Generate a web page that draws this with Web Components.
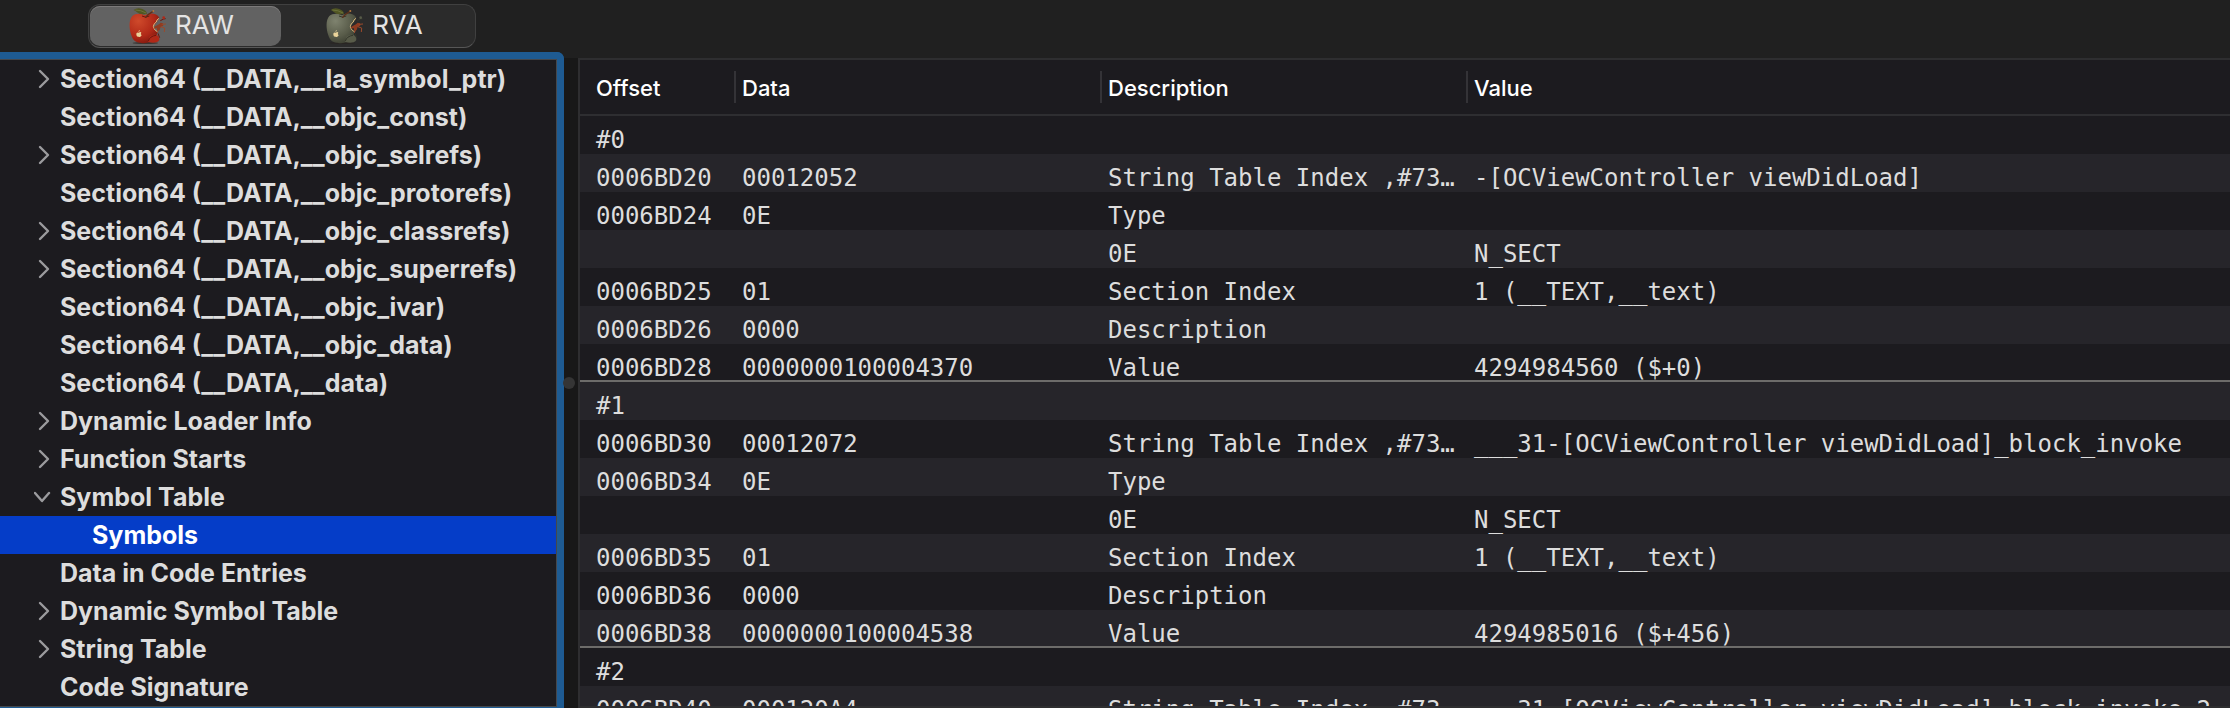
<!DOCTYPE html>
<html lang="en">
<head>
<meta charset="utf-8">
<title>Mach-O Viewer</title>
<style>
html, body { margin: 0; height: 100%; background: #202020; }
body { font-family: Inter, "Liberation Sans", sans-serif; color: #dddddd; }
</style>
</head>
<body>
<viewer-window></viewer-window>
<script>
const define = (name, html, setup) => {
  const template = document.createElement('template');
  template.innerHTML = html;
  customElements.define(name, class extends HTMLElement {
    constructor() {
      super();
      this.attachShadow({ mode: 'open' }).append(template.content.cloneNode(true));
    }
    connectedCallback() { if (setup) setup(this, this.shadowRoot); }
  });
};

define('apple-icon', `
<style>
:host { display: block; width: 40px; height: 38px; --light: #cf4a2b; --body: #b02817; --dark: #6f150d; }
:host([tone="green"]) { --light: #7f836f; --body: #585b49; --dark: #34372b; }
svg { display: block; width: 100%; height: 100%; }
.l { stop-color: var(--light); } .b { stop-color: var(--body); } .d { stop-color: var(--dark); }
.dark { stroke: var(--dark); } .foot { fill: var(--body); }
</style>
<svg viewBox="50 18 120 114" aria-hidden="true">
  <defs><radialGradient id="g" cx=".3" cy=".25" r=".9"><stop class="l" offset="0"/><stop class="b" offset=".6"/><stop class="d" offset="1"/></radialGradient></defs>
  <ellipse cx="102" cy="126" rx="38" ry="3" fill="#2a2421" opacity=".7"/>
  <path fill="url(#g)" d="M101 43C91 36 72 36 63 45 52 57 53 82 60 103 65 118 74 126 87 125 98 128 108 126 117 123L136 103 138 94 132 88 126 76 137 62 144 50C136 35 113 35 101 43Z"/>
  <path class="foot" d="M115 106Q133 95 141 106 149 119 136 124 122 127 110 122Z"/>
  <path fill="none" class="dark" stroke-width="3" d="M92 45Q102 52 114 45M111 120Q116 105 134 103M140 97l5 13"/>
  <path fill="none" stroke="#d8b67c" stroke-width="3" d="M143 52l-6 5-2 6-6 5-3 8 3 8 4 5 6 3"/>
  <path fill="#8f3b20" d="M129 77l14-7 5-5 7 2 1 7-8 4-3 9-7 4-2-10-8 2z"/>
  <path fill="none" stroke="#9a4a2c" stroke-width="3" d="M151 70l13-1M148 77l12 4-1 12M141 88l-3 8"/>
  <path fill="none" class="dark" stroke-width="3" d="M147 59l10-5 6-1"/>
  <circle class="foot" cx="157" cy="50" r="4"/>
  <path fill="#515623" d="M67 27Q78 18 93 24 106 29 107 38 87 43 77 34 73 29 67 27Z"/>
  <path fill="none" stroke="#788045" stroke-width="2" d="M72 27Q89 27 104 36"/>
  <path fill="none" stroke="#5c301b" stroke-width="4" stroke-linecap="round" d="M103 49Q109 40 125 31"/>
  <circle cx="126" cy="30" r="3" fill="#b4773d"/>
  <path fill="#ead49b" d="M82 95q6-4 8 0-4 4 1 8-4 7-9 4-6 2-7-6-1-8 7-6zM81 93q0-4 5-6 0 5-5 6z"/>
</svg>`);

define('mode-switch', `
<style>
:host { display: block; }
div { display: inline-flex; gap: 2px; box-sizing: border-box; width: 388px; height: 44px; padding: 1px; border: 1px solid #404040; border-bottom-color: #575757; border-radius: 12px; background: #2b2b2b; }
button { flex: 1; display: flex; align-items: center; justify-content: center; gap: 7px; margin: 0; padding: 0 9px 0 0; border: 0; border-radius: 10px; background: none; color: #e4e4e4; font: 400 26px/36px Inter, sans-serif; }
button span { padding-bottom: 2px; }
button[aria-pressed="true"] { background: #626262; box-shadow: inset 0 1px #7c7a7a; }
</style>
<div role="group" aria-label="Address mode">
  <button type="button" aria-pressed="true"><apple-icon></apple-icon><span>RAW</span></button>
  <button type="button" aria-pressed="false"><apple-icon tone="green"></apple-icon><span>RVA</span></button>
</div>`);

define('tree-row', `
<style>
:host { display: block; }
button { display: flex; align-items: center; gap: 6px; width: 100%; height: 38px; margin: 0; padding: 0 0 0 34px; border: 0; background: none; color: #dddddd; font: 700 25px/38px Inter, sans-serif; white-space: nowrap; text-align: left; }
svg { flex: none; width: 20px; height: 20px; fill: none; stroke: #9b9b9e; stroke-width: 2.4; stroke-linecap: round; stroke-linejoin: round; }
path { display: none; }
:host([state="closed"]) .closed, :host([state="open"]) .open { display: inline; }
:host([nested]) button { padding-left: 66px; }
:host([selected]) button { background: #053dc8; color: #ffffff; }
</style>
<button type="button"><svg viewBox="0 0 20 20" aria-hidden="true"><path class="closed" d="M6 2l8 8-8 8"/><path class="open" d="M1 6l7 8 7-8"/></svg><slot></slot></button>`);

define('section-tree', `
<style>
:host { display: block; box-sizing: border-box; overflow: hidden; border: solid #1e5b92; border-width: 7px 7px 1px 0; border-radius: 0 7px 0 0; background: #1e5b92; }
nav { box-sizing: border-box; height: 100%; overflow: hidden; background: #1c1b1f; border: solid #45484c; border-width: 1px 1px 1px 0; }
</style>
<nav aria-label="Sections"></nav>`, (host, root) => {
  const rows = [
    ['Section64 (__DATA,__la_symbol_ptr)', 'closed'], ['Section64 (__DATA,__objc_const)'],
    ['Section64 (__DATA,__objc_selrefs)', 'closed'], ['Section64 (__DATA,__objc_protorefs)'],
    ['Section64 (__DATA,__objc_classrefs)', 'closed'], ['Section64 (__DATA,__objc_superrefs)', 'closed'],
    ['Section64 (__DATA,__objc_ivar)'], ['Section64 (__DATA,__objc_data)'], ['Section64 (__DATA,__data)'],
    ['Dynamic Loader Info', 'closed'], ['Function Starts', 'closed'], ['Symbol Table', 'open'],
    ['Symbols', 'selected'], ['Data in Code Entries'], ['Dynamic Symbol Table', 'closed'],
    ['String Table', 'closed'], ['Code Signature']
  ];
  for (const [text, state] of rows) {
    const row = document.createElement('tree-row');
    if (state === 'selected') { row.toggleAttribute('selected', true); row.toggleAttribute('nested', true); }
    else if (state) row.setAttribute('state', state);
    row.textContent = text;
    root.querySelector('nav').append(row);
  }
});

define('symbol-table', `
<style>
:host { display: block; box-sizing: border-box; overflow: hidden; border: 2px solid #2e2e30; border-right: 0; background: #1c1b1f; }
table { width: 100%; table-layout: fixed; border-collapse: separate; border-spacing: 0; }
.offset { width: 156px; } .wide { width: 366px; }
th { height: 54px; padding: 0; border-bottom: 2px solid #2e2e31; color: #ffffff; font: 500 22px/30px Inter, sans-serif; text-align: left; }
th span { display: block; padding: 2px 0 0 6px; border-right: 2px solid #343337; }
th:first-child span { padding-left: 16px; }
th:last-child span { border: 0; }
td { box-sizing: border-box; height: 38px; padding: 10px 8px 0 6px; font: 24px/28px "DejaVu Sans Mono", monospace; white-space: nowrap; overflow: hidden; text-overflow: ellipsis; }
td:first-child { padding: 10px 0 0 16px; }
tbody tr:nth-child(even) { background: #26252a; }
.last td { box-shadow: inset 0 -2px #6d6c6a; }
</style>
<table>
  <colgroup><col class="offset"><col class="wide"><col class="wide"><col></colgroup>
  <thead><tr><th><span>Offset</span></th><th><span>Data</span></th><th><span>Description</span></th><th><span>Value</span></th></tr></thead>
  <tbody></tbody>
</table>`, (host, root) => {
  const index = 'String Table Index ,#73…';
  const rows = [
    ['#0', '', '', ''],
    ['0006BD20', '00012052', index, '-[OCViewController viewDidLoad]'],
    ['0006BD24', '0E', 'Type', ''],
    ['', '', '0E', 'N_SECT'],
    ['0006BD25', '01', 'Section Index', '1 (__TEXT,__text)'],
    ['0006BD26', '0000', 'Description', ''],
    ['0006BD28', '0000000100004370', 'Value', '4294984560 ($+0)'],
    ['#1', '', '', ''],
    ['0006BD30', '00012072', index, '___31-[OCViewController viewDidLoad]_block_invoke'],
    ['0006BD34', '0E', 'Type', ''],
    ['', '', '0E', 'N_SECT'],
    ['0006BD35', '01', 'Section Index', '1 (__TEXT,__text)'],
    ['0006BD36', '0000', 'Description', ''],
    ['0006BD38', '0000000100004538', 'Value', '4294985016 ($+456)'],
    ['#2', '', '', ''],
    ['0006BD40', '000120A4', index, '___31-[OCViewController viewDidLoad]_block_invoke_2']
  ];
  const body = root.querySelector('tbody');
  rows.forEach((cells, i) => {
    const tr = body.insertRow();
    if (i % 7 === 6) tr.className = 'last';
    for (const text of cells) tr.insertCell().textContent = text;
  });
});

define('split-handle', `
<style>
:host { display: flex; align-items: center; justify-content: center; box-sizing: border-box; background: #181818; }
i { flex: none; width: 12px; height: 12px; margin-right: 4px; border-radius: 50%; background: #353535; }
</style>
<i></i>`);

define('viewer-window', `
<style>
:host { display: flex; flex-direction: column; height: 100vh; overflow: hidden; }
header { flex: none; height: 44px; padding: 4px 88px; }
main { flex: 1; min-height: 0; display: flex; }
section-tree { flex: 0 0 564px; }
split-handle { flex: 0 0 14px; min-width: 0; margin-top: 6px; }
symbol-table { flex: 1; min-width: 0; margin-top: 6px; }
</style>
<header><mode-switch></mode-switch></header>
<main><section-tree></section-tree><split-handle></split-handle><symbol-table></symbol-table></main>`);
</script>
</body>
</html>
